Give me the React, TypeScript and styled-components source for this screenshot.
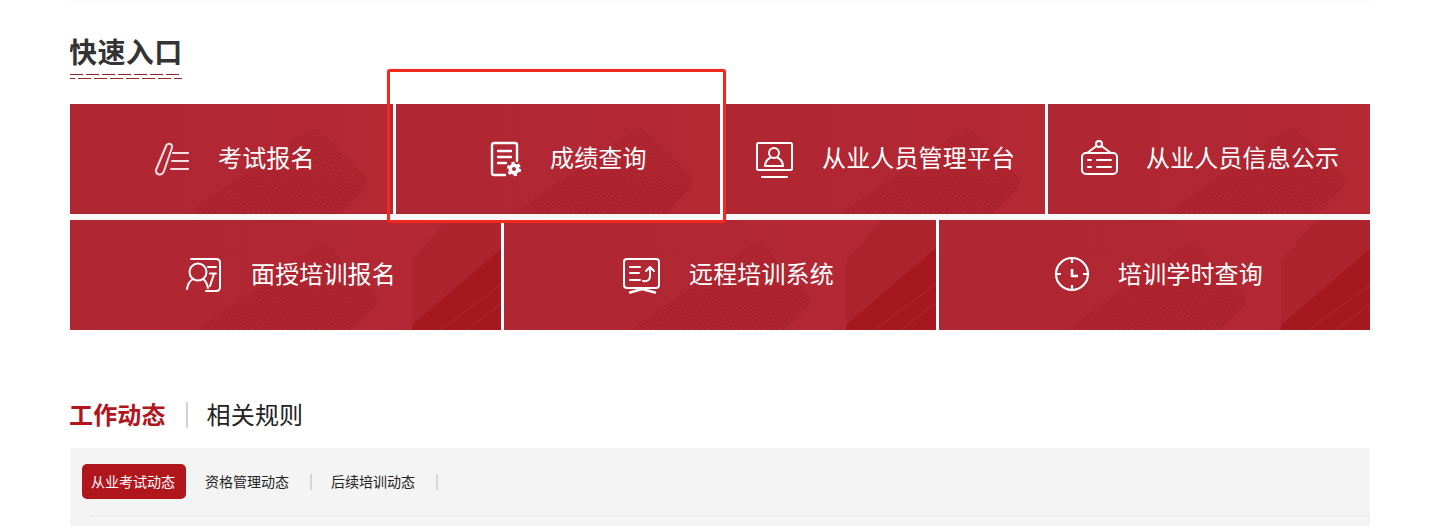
import React from "react";
import styled, { createGlobalStyle } from "styled-components";

const GlobalStyle = createGlobalStyle`
  html, body {
    margin: 0;
    padding: 0;
    background: #ffffff;
  }
  body {
    font-family: "Noto Sans CJK SC", "Liberation Sans", sans-serif;
    overflow: hidden;
  }
`;

const Page = styled.div`
  position: relative;
  width: 1300px;
  height: 526px;
  margin: 0 0 0 70px;
  box-sizing: border-box;
  overflow: hidden;
`;

const TopShade = styled.div`
  height: 4px;
  margin-bottom: 28px;
  background: linear-gradient(180deg, #f9f9f9, #ffffff);
`;

const SectionTitle = styled.h2`
  display: block;
  margin: 0 0 0 -1px;
  font-size: 28px;
  letter-spacing: 0.4px;
  line-height: 38px;
  font-weight: 700;
  color: #333333;
`;

const TitleRule = styled.svg`
  display: block;
  width: 112px;
  height: 6px;
  margin-top: 4px;
`;

const Grid = styled.div`
  display: flex;
  flex-direction: column;
  gap: 6px;
  margin-top: 24px;
  background: #faf7f8;
`;

const Row = styled.div<{ $cols: string }>`
  display: grid;
  grid-template-columns: ${(p) => p.$cols};
  gap: 3px;
  background: #ffffff;
`;

const Tile = styled.a<{ $pad: number }>`
  position: relative;
  min-width: 0;
  height: 110px;
  overflow: hidden;
  display: flex;
  align-items: center;
  padding-left: ${(p) => p.$pad}px;
  box-sizing: border-box;
  background: linear-gradient(90deg, #af2732 0%, #b12733 50%, #b52935 100%);
  color: #ffffff;
  font-size: 24px;
  letter-spacing: 0.15px;
  line-height: 32px;
`;

const Art = styled.svg`
  position: absolute;
  left: 0;
  top: 0;
  height: 110px;
`;

const Icon = styled.svg`
  position: relative;
  width: 38px;
  height: 38px;
  flex: none;
  fill: none;
  stroke: #ffffff;
  stroke-width: 2;
  stroke-linecap: round;
  stroke-linejoin: round;
`;

const Label = styled.span<{ $gap: number }>`
  position: relative;
  margin-left: ${(p) => p.$gap}px;
  margin-bottom: 4px;
  white-space: nowrap;
`;

const Highlight = styled.div`
  position: absolute;
  left: 317px;
  top: 69px;
  width: 339px;
  height: 154px;
  box-sizing: border-box;
  border: 3px solid #f02a1e;
  border-radius: 3px;
  box-shadow: 0 0 1px rgba(240, 42, 30, 0.6);
`;

const NewsTabs = styled.div`
  display: flex;
  align-items: center;
  margin-top: 65px;
  height: 40px;
`;

const NewsTab = styled.span<{ $active?: boolean }>`
  margin: ${(p) => (p.$active ? "0 0 2px -1px" : "0 0 2px")};
  font-size: 24px;
  letter-spacing: 0.15px;
  line-height: 32px;
  font-weight: ${(p) => (p.$active ? 700 : 400)};
  color: ${(p) => (p.$active ? "#b1161d" : "#222222")};
`;

const NewsDivider = styled.i`
  width: 2px;
  height: 26px;
  margin: 0 19px 0 20px;
  background: #d4d4d4;
`;

const Panel = styled.div`
  margin-top: 13px;
  height: 78px;
  padding: 16px 0 0 12px;
  box-sizing: border-box;
  background: #f4f4f4;
`;

const PanelTabs = styled.div`
  display: flex;
  align-items: center;
  height: 35px;
`;

const PanelTab = styled.span<{ $active?: boolean }>`
  display: flex;
  align-items: center;
  justify-content: center;
  height: 35px;
  box-sizing: border-box;
  font-size: 14px;
  color: ${(p) => (p.$active ? "#ffffff" : "#222222")};
  background: ${(p) => (p.$active ? "#b1161d" : "transparent")};
  border-radius: ${(p) => (p.$active ? "5px" : "0")};
  padding: ${(p) => (p.$active ? "0 11px 2px 9px" : "0 0 2px")};
  margin-right: ${(p) => (p.$active ? "19px" : "0")};
`;

const PanelDivider = styled.i`
  width: 2px;
  height: 16px;
  margin: 0 19px 0 21px;
  background: #d6d6d6;
`;

const PanelRule = styled.div`
  height: 1px;
  margin: 16px 0 0 8px;
  background: #e9e9e9;
`;

const TileArt = ({ wide, id }: { wide?: boolean; id: string }) => {
  const w = wide ? 432 : 325;
  return (
    <Art viewBox={`0 0 ${w} 110`} style={{ width: w }}>
      <defs>
        <pattern id={`s${id}`} width="3.4" height="3.4" patternUnits="userSpaceOnUse" patternTransform="rotate(38)">
          <rect width="3.4" height="3.4" fill="#a9212c" />
          <rect width="3.4" height="1.2" fill="#b22935" />
        </pattern>
        <linearGradient id={`f${id}`} x1="0" y1="0" x2="0" y2="1">
          <stop offset="0" stopColor="#fff" stopOpacity="0.35" />
          <stop offset="0.4" stopColor="#fff" stopOpacity="0.7" />
          <stop offset="1" stopColor="#fff" stopOpacity="1" />
        </linearGradient>
        <mask id={`m${id}`}>
          <rect width={w} height="110" fill={`url(#f${id})`} />
        </mask>
      </defs>
      {wide ? (
        <>
          <path
            d="M127 110 L243 28 Q253 21 262 29 L303 72 Q310 80 304 87 L280 110 Z"
            fill={`url(#s${id})`}
            mask={`url(#m${id})`}
          />
          <path d="M342 110 L342 41 L377 0 L432 0 L432 110 Z" fill="#a9212c" opacity="0.6" />
          <path d="M342 110 L342 105 L432 28 L432 110 Z" fill="#a6181f" />
          <path d="M370 110 L432 64 M397 110 L432 83" stroke="#b42a33" strokeWidth="1" />
        </>
      ) : (
        <path
          d="M118 110 L235 28 Q245 21 253 29 L293 70 Q300 78 294 85 L270 110 Z"
          fill={`url(#s${id})`}
          mask={`url(#m${id})`}
        />
      )}
    </Art>
  );
};

const PencilIcon = () => (
  <Icon viewBox="0 0 38 38" opacity="0.85">
    <path d="M15.500 5 Q17 3 19.500 4 Q21.500 5 21 7.500 L13 31 Q11.500 35 8 34.500 Q4.500 33.500 5 30 Z" />
    <path d="M22 13 H38 M21 21 H38 M20 29 H38" />
  </Icon>
);

const ReportIcon = () => (
  <Icon viewBox="0 0 38 38">
    <path d="M19 35 H8 Q6 35 6 33 V5 Q6 3 8 3 H29 Q31 3 31 5 V21" strokeWidth="2.400" />
    <path d="M12 11 H25 M12 17 H25 M12 23 H20" strokeWidth="2.400" />
    <circle cx="28" cy="29" r="5.500" fill="#ffffff" stroke="none" />
    <circle cx="28" cy="29" r="6.200" strokeWidth="2" strokeDasharray="3.250 3.240" strokeLinecap="butt" />
    <circle cx="28" cy="29" r="2" fill="#b12733" stroke="none" />
  </Icon>
);

const MonitorIcon = () => (
  <Icon viewBox="0 0 38 38">
    <rect x="2" y="3" width="35" height="27" rx="1.500" />
    <circle cx="19" cy="13" r="5" />
    <path d="M10 26 Q10.500 20 15 18 M28 26 Q27.500 20 23 18 M10 26 H28" />
    <path d="M7 37 H32" />
  </Icon>
);

const SignIcon = () => (
  <Icon viewBox="0 0 38 38">
    <circle cx="19" cy="4" r="3" />
    <path d="M16.500 6 L7 13 M21.500 6 L31 13" />
    <rect x="2" y="13" width="35" height="21" rx="4" />
    <path d="M8 20 H11 M8 27 H11 M17 20 H31 M17 27 H31" />
  </Icon>
);

const TrainerIcon = () => (
  <Icon viewBox="0 0 38 38">
    <circle cx="13" cy="16" r="8.500" />
    <path d="M8 23 Q3 26 2 33 M18 23 Q22 26 23 32" />
    <path d="M6 3 H31 Q35 3 35 7 V31 Q35 35 31 35 H21" />
    <path d="M23 11 H31 M25 17.500 H31 M29 18 L25 30" />
  </Icon>
);

const BoardIcon = () => (
  <Icon viewBox="0 0 38 38">
    <rect x="2" y="3" width="35" height="29" rx="3" />
    <path d="M8 11 H18 M8 17 H17 M8 24 H18" />
    <path d="M21 25 Q28 26 28 20 V11 M24 15 L28 11 L32 15" />
    <path d="M8 36.500 L20 33 L33 36.500" strokeWidth="2.400" />
  </Icon>
);

const ClockIcon = () => (
  <Icon viewBox="0 0 38 38">
    <circle cx="20" cy="18" r="16" strokeWidth="2.200" />
    <path d="M20 2 V7 M20 29 V34 M4 18 H9 M31 18 H36" strokeWidth="2.200" strokeLinecap="butt" />
    <path d="M20 13 V20 H26" strokeWidth="2.600" strokeLinecap="butt" />
  </Icon>
);

const firstRow = [
  { label: "考试报名", pad: 81, gap: 29, icon: <PencilIcon /> },
  { label: "成绩查询", pad: 90, gap: 26, icon: <ReportIcon /> },
  { label: "从业人员管理平台", pad: 32, gap: 29, icon: <MonitorIcon /> },
  { label: "从业人员信息公示", pad: 32, gap: 28, icon: <SignIcon /> },
];

const secondRow = [
  { label: "面授培训报名", pad: 115, gap: 28, icon: <TrainerIcon /> },
  { label: "远程培训系统", pad: 118, gap: 29, icon: <BoardIcon /> },
  { label: "培训学时查询", pad: 113, gap: 28, icon: <ClockIcon /> },
];

const App = () => {
  return (
    <>
      <GlobalStyle />
      <Page>
        <TopShade />
        <SectionTitle>快速入口</SectionTitle>
        <TitleRule viewBox="0 0 112 6">
          <path d="M0 .5 H112" stroke="#8f2a2e" strokeWidth="1.200" strokeDasharray="13 3" />
          <path d="M0 4.500 H112" stroke="#8f2a2e" strokeWidth="1.200" strokeDasharray="13 3" strokeDashoffset="8" />
        </TitleRule>
        <Grid>
          <Row $cols="323px 324px 322px 322px">
            {firstRow.map((t, i) => (
              <Tile key={t.label} $pad={t.pad}>
                <TileArt id={`a${i}`} />
                {t.icon}
                <Label $gap={t.gap}>{t.label}</Label>
              </Tile>
            ))}
          </Row>
          <Row $cols="431px 432px 431px">
            {secondRow.map((t, i) => (
              <Tile key={t.label} $pad={t.pad}>
                <TileArt wide id={`b${i}`} />
                {t.icon}
                <Label $gap={t.gap}>{t.label}</Label>
              </Tile>
            ))}
          </Row>
        </Grid>
        <NewsTabs>
          <NewsTab $active>工作动态</NewsTab>
          <NewsDivider />
          <NewsTab>相关规则</NewsTab>
        </NewsTabs>
        <Panel>
          <PanelTabs>
            <PanelTab $active>从业考试动态</PanelTab>
            <PanelTab>资格管理动态</PanelTab>
            <PanelDivider />
            <PanelTab>后续培训动态</PanelTab>
            <PanelDivider />
          </PanelTabs>
          <PanelRule />
        </Panel>
        <Highlight />
      </Page>
    </>
  );
};

export default App;
